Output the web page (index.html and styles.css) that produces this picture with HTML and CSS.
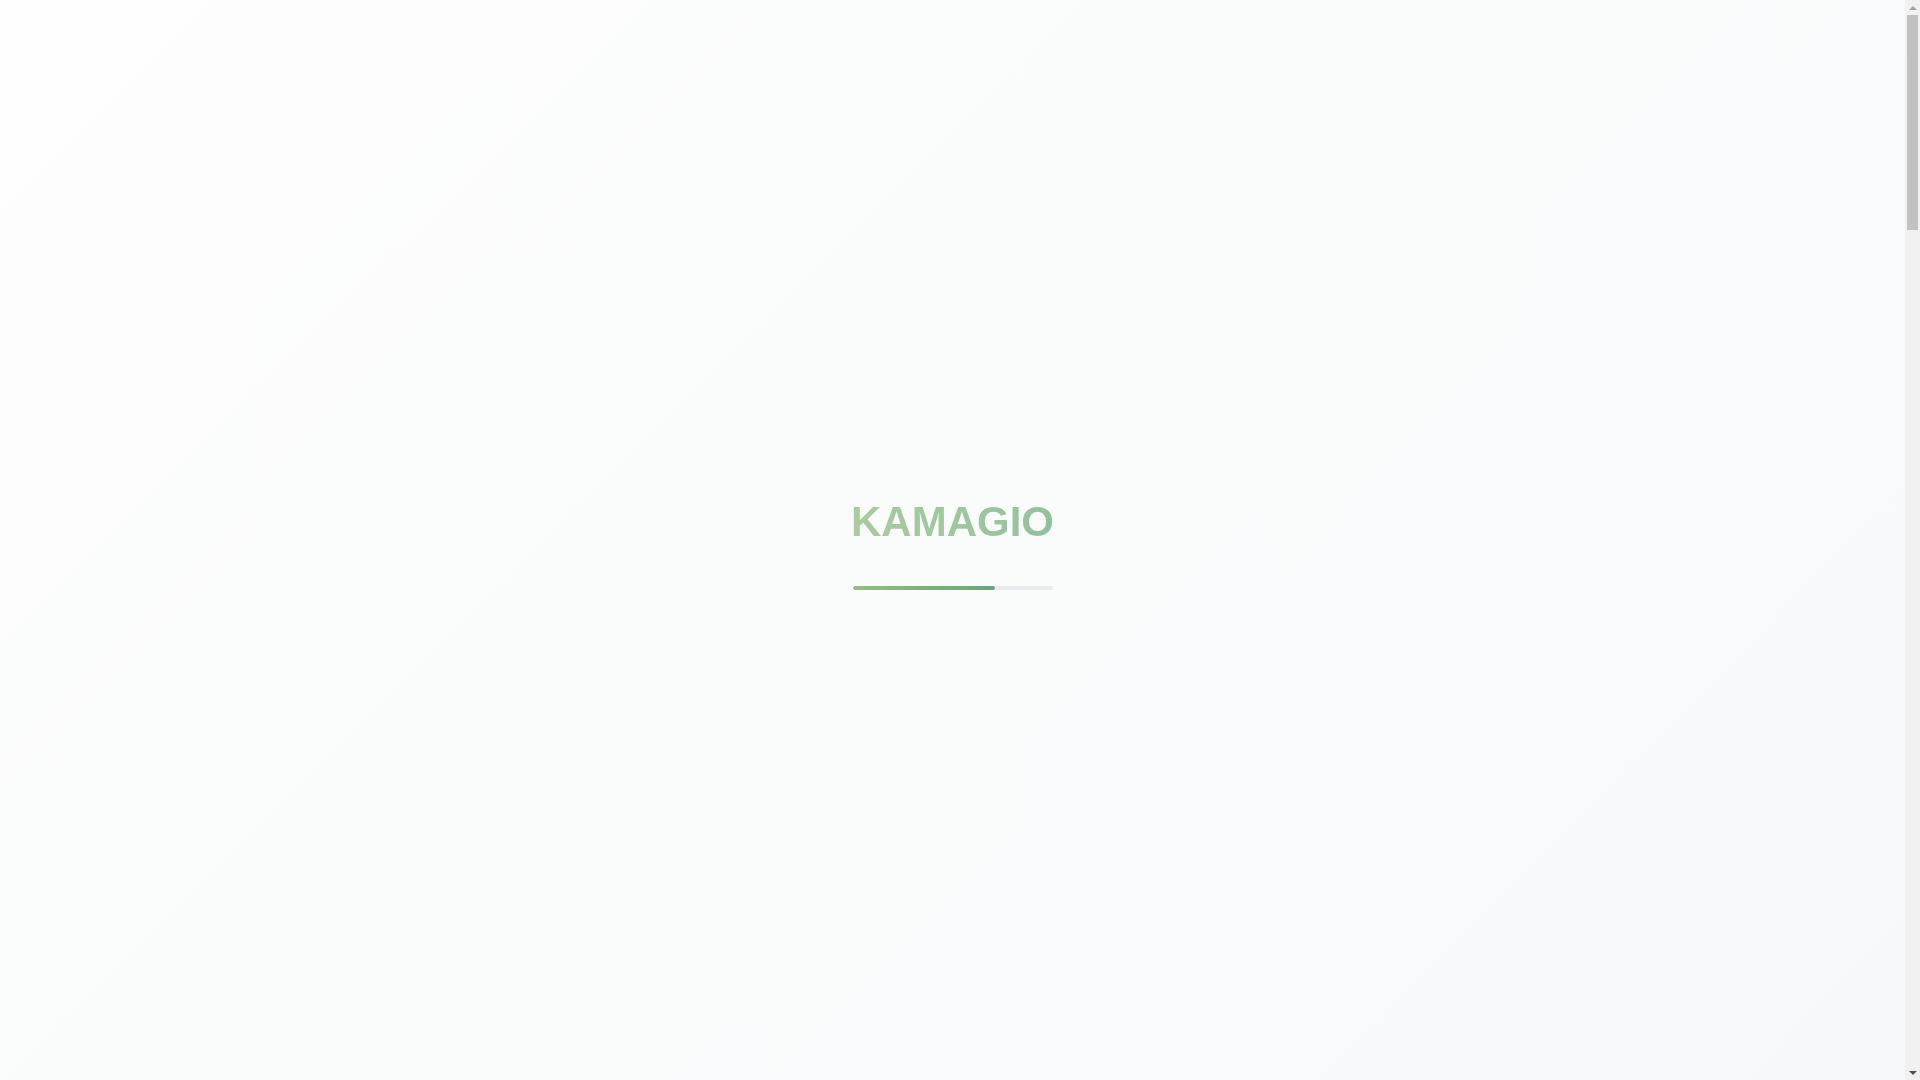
FILE: index.html
```html
<!DOCTYPE html>
<html lang="en">
<head>
<meta charset="utf-8">
<title>KAMAGIO</title>
<link rel="stylesheet" href="styles.css">
</head>
<body>
<div class="page"></div>
<div class="loader">
  <div class="loader-inner">
    <div class="brand">KAMAGIO</div>
    <div class="progress"><div class="progress-fill"></div></div>
  </div>
</div>
<div class="scrollbar">
  <div class="sb-arrow sb-up"></div>
  <div class="sb-track"><div class="sb-thumb"></div></div>
  <div class="sb-arrow sb-down"></div>
</div>
</body>
</html>
```
FILE: styles.css
```css
html, body {
  margin: 0;
  padding: 0;
}
body {
  font-family: "Liberation Sans", Arial, sans-serif;
  background: #f8f9fa;
}
.page {
  height: 5300px;
}
.loader {
  position: fixed;
  top: 0;
  left: 0;
  bottom: 0;
  right: 15px;
  display: flex;
  align-items: center;
  justify-content: center;
  background: linear-gradient(135deg, #fefefe 0%, #fafbfb 50%, #f6f8fa 100%);
  z-index: 10;
}
.loader-inner {
  display: flex;
  flex-direction: column;
  align-items: center;
  padding-top: 8px;
}
.brand {
  font-size: 42px;
  line-height: 48px;
  font-weight: 700;
  letter-spacing: 0;
  background: linear-gradient(90deg, #abcb9f 0%, #9dc69e 60%, #93c09d 100%);
  -webkit-background-clip: text;
  background-clip: text;
  color: transparent;
}
.progress {
  margin-top: 40px;
  width: 200px;
  height: 4px;
  border-radius: 2px;
  background: #e9eaed;
  overflow: hidden;
}
.progress-fill {
  width: 71%;
  height: 100%;
  border-radius: 2px;
  background: linear-gradient(90deg, #97bd81 0%, #7eb07c 50%, #6aa67a 100%);
}
.scrollbar {
  position: fixed;
  top: 0;
  right: 0;
  bottom: 0;
  width: 15px;
  background: #f1f1f1;
  display: flex;
  flex-direction: column;
  z-index: 20;
}
.sb-arrow {
  height: 15px;
  flex: none;
  display: flex;
  align-items: center;
  justify-content: center;
}
.sb-up::before {
  content: "";
  width: 0;
  height: 0;
  border-left: 4px solid transparent;
  border-right: 4px solid transparent;
  border-bottom: 4px solid #a3a3a3;
}
.sb-down::before {
  content: "";
  width: 0;
  height: 0;
  border-left: 4px solid transparent;
  border-right: 4px solid transparent;
  border-top: 4px solid #505050;
}
.sb-track {
  flex: 1;
  padding: 0 2px;
}
.sb-thumb {
  height: 215px;
  background: #c1c1c1;
}
```
